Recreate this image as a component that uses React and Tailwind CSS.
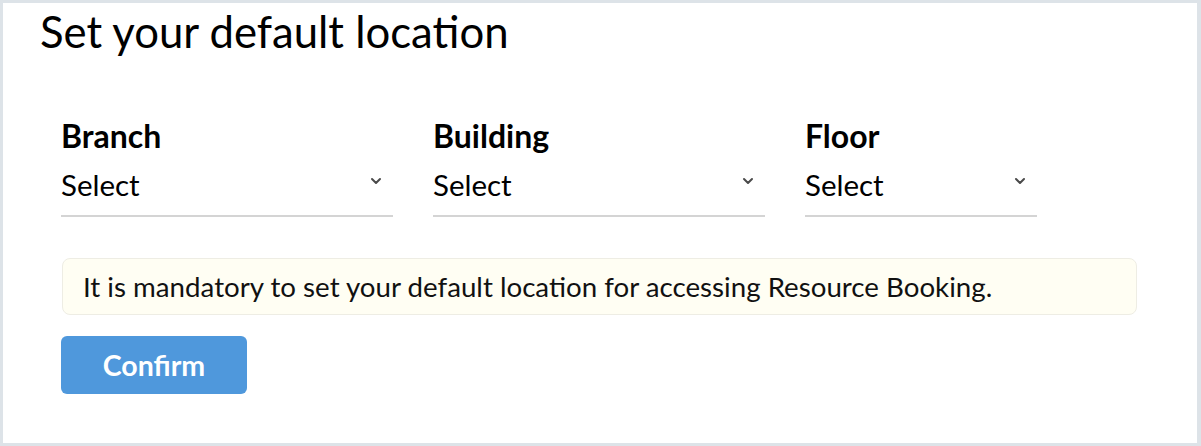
import React from "react";

function ChevronDown() {
  return (
    <svg width="12" height="8" viewBox="0 0 12 8" fill="none" className="text-[#4a4a4a]">
      <path d="M2 2l4 4 4-4" stroke="currentColor" strokeWidth="2" strokeLinecap="round" strokeLinejoin="round" />
    </svg>
  );
}

function SelectField({ label, width }) {
  return (
    <div className={width}>
      <div className="text-[32px] font-bold text-black leading-none">{label}</div>
      <div className="flex items-start justify-between border-b-2 border-[#d4d4d4] pt-[18px] pb-[16px] pr-[11px]">
        <span className="text-[29.5px] text-black leading-none">Select</span>
        <span className="mt-[7px]">
          <ChevronDown />
        </span>
      </div>
    </div>
  );
}

export default function App() {
  return (
    <div
      className="w-[1201px] h-[446px] bg-[#dde3e8] pt-[3px] pl-[3px] pr-[4px] pb-[3px]"
      style={{ fontFamily: "Lato, 'Noto Sans', sans-serif" }}
    >
      <div className="h-full bg-white pl-[37px] pr-[60px] pt-[7px]">
        <h1 className="text-[43.7px] text-black leading-none">Set your default location</h1>

        <div className="flex gap-[40px] pl-[21px] mt-[66px]">
          <SelectField label="Branch" width="w-[332px]" />
          <SelectField label="Building" width="w-[332px]" />
          <SelectField label="Floor" width="w-[232px]" />
        </div>

        <div className="ml-[22px] mt-[41px] h-[57px] flex items-center bg-[#fffef3] border border-[#eeede4] rounded-[8px] pl-[20px]">
          <p className="text-[27.7px] text-[#111] leading-none">
            It is mandatory to set your default location for accessing Resource Booking.
          </p>
        </div>

        <button className="ml-[21px] mt-[21px] w-[186px] h-[58px] rounded-[6px] bg-[#4f98dc] text-white text-[28.5px] font-bold leading-none">
          Confirm
        </button>
      </div>
    </div>
  );
}
